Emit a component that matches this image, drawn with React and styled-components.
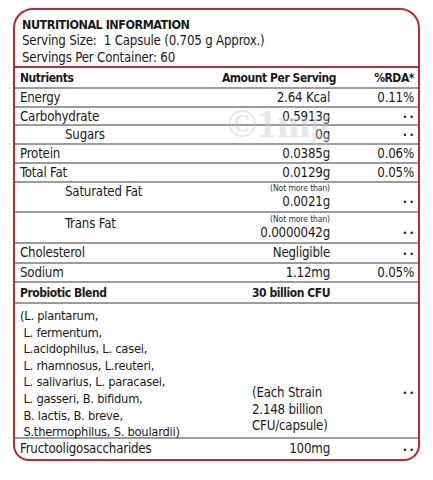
import React from 'react';
import styled, { createGlobalStyle } from 'styled-components';

const GlobalStyle = createGlobalStyle`
  body {
    margin: 0;
    background: #fff;
    font-family: "DejaVu Sans Condensed", "Liberation Sans", sans-serif;
    color: #1a1a1a;
  }
`;

const Page = styled.div`
  width: 433px;
  height: 480px;
  padding: 8px 13px 0 13px;
  box-sizing: border-box;
`;

const Card = styled.div`
  position: relative;
  width: 407px;
  border: 2px solid #c4262e;
  border-radius: 20px 20px 16px 16px;
  overflow: hidden;
  box-sizing: border-box;
`;

const Head = styled.div`
  padding: 6px 7px 0 7px;
  height: 58px;
  box-sizing: border-box;
  border-bottom: 2px solid #b5323a;
  display: flex;
  flex-direction: column;
`;

const Title = styled.div`
  font-weight: bold;
  font-size: 12.5px;
  letter-spacing: -0.5px;
  line-height: 17px;
`;

const HeadLine = styled.div`
  font-size: 13.2px;
  letter-spacing: -0.2px;
  line-height: 16.5px;
`;

const Row = styled.div`
  display: grid;
  grid-template-columns: 1fr 150px 84px;
  height: ${p => p.h || 19}px;
  box-sizing: border-box;
  padding: 0 4px 0 ${p => (p.indent ? 50 : 5)}px;
  border-bottom: ${p => (p.last ? 'none' : '2px solid #9c9c9c')};
  font-size: ${p => (p.bold ? 12 : 13.2)}px;
  letter-spacing: ${p => (p.bold ? -0.45 : -0.2)}px;
  font-weight: ${p => (p.bold ? 'bold' : 'normal')};
  align-items: center;
`;

const Name = styled.div`
  align-self: ${p => p.top !== undefined ? 'start' : 'center'};
  padding-top: ${p => p.top || 0}px;
  line-height: 16px;
  white-space: nowrap;
`;

const Amount = styled.div`
  text-align: right;
  line-height: 16px;
  margin-right: ${p => p.shift || 0}px;
  white-space: nowrap;
`;

const Rda = styled.div`
  text-align: right;
  line-height: 16px;
  align-self: ${p => p.end ? 'end' : 'center'};
  padding-bottom: ${p => p.pb || 0}px;
`;

const Stacked = styled.div`
  display: flex;
  flex-direction: column;
  align-items: flex-end;
  align-self: end;
  padding-bottom: 1px;
`;

const Note = styled.div`
  font-size: 8.5px;
  letter-spacing: -0.1px;
  line-height: 11px;
  color: #333;
`;

const Dots = styled.span`
  font-size: 9px;
  letter-spacing: 2px;
  margin-right: -2px;
`;

const StrainRow = styled.div`
  display: grid;
  grid-template-columns: 1fr 150px 84px;
  height: 135px;
  box-sizing: border-box;
  padding: 4px 4px 0 5px;
  border-bottom: 2px solid #9c9c9c;
  font-size: 12.8px;
  letter-spacing: -0.25px;
`;

const StrainList = styled.div`
  line-height: 16.6px;
  white-space: pre;
`;

const EachStrain = styled.div`
  align-self: end;
  padding: 0 0 6px 72px;
  line-height: 16.6px;
  font-size: 13.2px;
  letter-spacing: -0.2px;
  white-space: nowrap;
`;

const Watermark = styled.div`
  position: absolute;
  left: 212px;
  top: 90px;
  font-family: "Liberation Serif", serif;
  font-weight: bold;
  font-size: 40px;
  color: #c4c4c4;
  opacity: 0.4;
  pointer-events: none;
`;

const strains = `(L. plantarum,
 L. fermentum,
 L.acidophilus, L. casei,
 L. rhamnosus, L.reuteri,
 L. salivarius, L. paracasei,
 L. gasseri, B. bifidum,
 B. lactis, B. breve,
 S.thermophilus, S. boulardii)`;

const rows = [
  { name: 'Energy', amount: '2.64 Kcal', rda: '0.11%' },
  { name: 'Carbohydrate', amount: '0.5913g', h: 18 },
  { name: 'Sugars', amount: '0g', indent: true },
  { name: 'Protein', amount: '0.0385g', rda: '0.06%' },
  { name: 'Total Fat', amount: '0.0129g', rda: '0.05%' },
];

const App = () => {
  return (
    <>
      <GlobalStyle />
      <Page>
        <Card>
          <Head>
            <Title>NUTRITIONAL INFORMATION</Title>
            <HeadLine>Serving Size:&nbsp; 1 Capsule (0.705 g Approx.)</HeadLine>
            <HeadLine>Servings Per Container: 60</HeadLine>
          </Head>
          <Row bold h={21}>
            <Name>Nutrients</Name>
            <Amount shift={-6}>Amount Per Serving</Amount>
            <Rda>%RDA*</Rda>
          </Row>
          {rows.map(r => (
            <Row key={r.name} h={r.h} indent={r.indent}>
              <Name>{r.name}</Name>
              <Amount>{r.amount}</Amount>
              <Rda>{r.rda || <Dots>••</Dots>}</Rda>
            </Row>
          ))}
          <Row indent h={30}>
            <Name top={1}>Saturated Fat</Name>
            <Stacked>
              <Note>(Not more than)</Note>
              <Amount>0.0021g</Amount>
            </Stacked>
            <Rda end pb={1}><Dots>••</Dots></Rda>
          </Row>
          <Row indent h={31}>
            <Name top={3}>Trans Fat</Name>
            <Stacked>
              <Note>(Not more than)</Note>
              <Amount>0.0000042g</Amount>
            </Stacked>
            <Rda end pb={1}><Dots>••</Dots></Rda>
          </Row>
          <Row h={20}>
            <Name>Cholesterol</Name>
            <Amount>Negligible</Amount>
            <Rda><Dots>••</Dots></Rda>
          </Row>
          <Row>
            <Name>Sodium</Name>
            <Amount>1.12mg</Amount>
            <Rda>0.05%</Rda>
          </Row>
          <Row bold h={21}>
            <Name>Probiotic Blend</Name>
            <Amount>30 billion CFU</Amount>
            <Rda />
          </Row>
          <StrainRow>
            <StrainList>{strains}</StrainList>
            <EachStrain>
              (Each Strain<br />2.148 billion<br />CFU/capsule)
            </EachStrain>
            <Rda end pb={40}><Dots>••</Dots></Rda>
          </StrainRow>
          <Row last h={20}>
            <Name>Fructooligosaccharides</Name>
            <Amount>100mg</Amount>
            <Rda><Dots>••</Dots></Rda>
          </Row>
          <Watermark>©1mg</Watermark>
        </Card>
      </Page>
    </>
  );
};

export default App;
